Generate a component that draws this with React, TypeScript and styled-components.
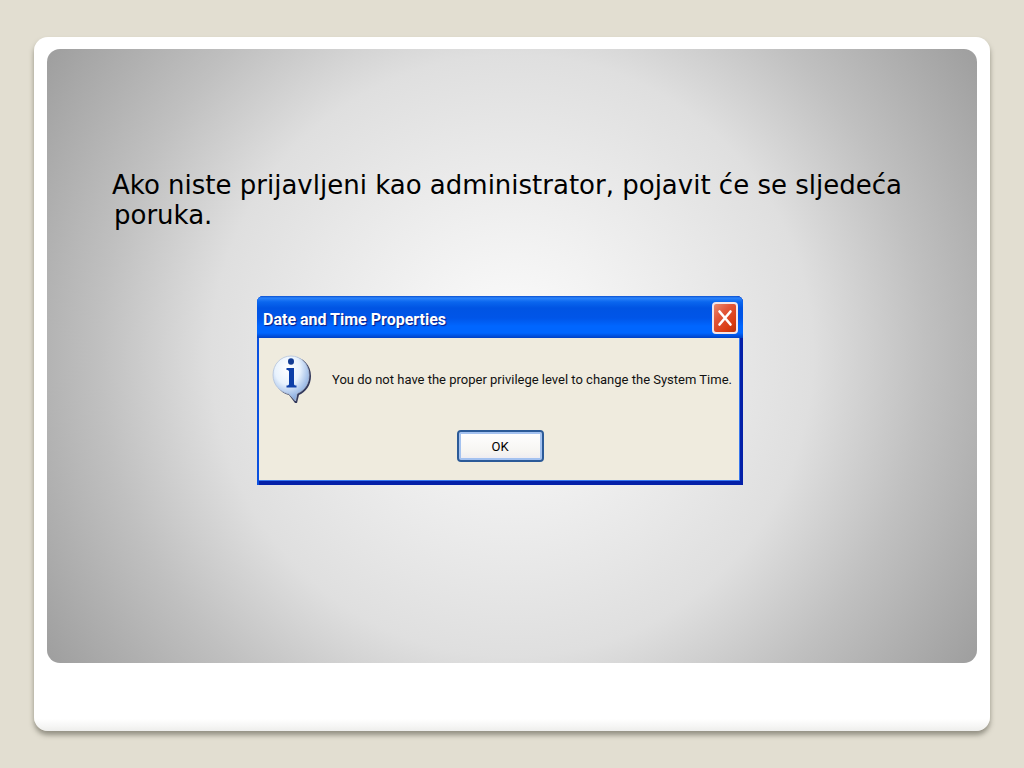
import React from "react";
import styled, { createGlobalStyle } from "styled-components";

const GlobalStyle = createGlobalStyle`
  *, *::before, *::after { box-sizing: border-box; }
  body { margin: 0; background: #e2ded1; }
`;

const Slide = styled.main`
  display: flex;
  min-height: 100vh;
  padding: 37px 34px;
`;

const Frame = styled.div`
  display: flex;
  flex: 1;
  padding: 12px 13px 68px;
  border-radius: 14px;
  background: linear-gradient(to top, #eeeeec 0, #f6f6f5 5px, #fff 12px);
  box-shadow: 0 4px 5px rgba(70, 68, 55, 0.5);
`;

const Panel = styled.section`
  display: flex;
  flex: 1;
  flex-direction: column;
  padding: 121px 65px 40px;
  border-radius: 13px;
  background: radial-gradient(circle farthest-corner at 50% 50%, #fdfdfd 0%, #e8e8e8 38%, #dfdfdf 54%, #c0c0c0 74%, #b0b0b0 86%, #9e9e9e 100%);
`;

const Message = styled.p`
  margin: 0;
  padding-left: 2px;
  color: #000;
  font: 26px/30px "DejaVu Sans", sans-serif;
  text-indent: -2px;
`;

const Dialog = styled.div`
  display: flex;
  flex-direction: column;
  align-self: center;
  width: 100%;
  max-width: 486px;
  margin: 66px 24px 0 0;
  border-radius: 6px 6px 0 0;
  background: #0831d9;
  box-shadow: inset 2px 0 #0a50e0, inset -3px 0 #0420a8, inset 0 -4px #0420a8;
  font-family: Roboto, sans-serif;
`;

const TitleBar = styled.header`
  display: flex;
  align-items: center;
  justify-content: space-between;
  height: 42px;
  padding: 2px 5px 0 6px;
  border-radius: 6px 6px 0 0;
  background: linear-gradient(#0a50d0 0, #2b83fa 2px, #0a66ee 6px, #0054e3 12px, #0055e8 22px, #0066ff 30px, #0066ff 37px, #0040c4 42px);
`;

const Title = styled.h1`
  margin: 0;
  padding-top: 3px;
  color: #fff;
  font-size: 16px;
  line-height: 24px;
  text-shadow: 1px 1px 1px #0a1883;
`;

const CloseButton = styled.button`
  display: grid;
  place-items: center;
  width: 26px;
  height: 32px;
  padding: 0;
  border: 2px solid #f4e6e8;
  border-radius: 4px;
  background: linear-gradient(135deg, #e98a70 0%, #e2573a 35%, #d93c12 75%, #b8330d 100%);
`;

const Body = styled.div`
  display: flex;
  flex-direction: column;
  height: 143px;
  margin: 0 3px 4px 2px;
  padding: 17px 11px 18px 13px;
  border-right: 1px solid #3a78ee;
  border-bottom: 1px solid #3a78ee;
  background: #efebde;
`;

const Notice = styled.div`
  display: flex;
  gap: 20px;
`;

const NoticeText = styled.p`
  margin: 15px 0 0;
  color: #111;
  font-size: 13px;
  line-height: 20px;
  white-space: nowrap;
`;

const OkButton = styled.button`
  align-self: center;
  width: 87px;
  height: 32px;
  margin-top: auto;
  padding: 2px 0 0;
  border: 2px solid #2b5a98;
  border-radius: 4px;
  background: linear-gradient(#fff, #f6f5f2 70%, #eceaf0);
  box-shadow: inset 0 0 0 2px #a4c2f0;
  color: #000;
  font: 13px/20px Roboto, sans-serif;
`;

const Bubble = styled.svg`
  flex: none;
`;

function InfoIcon() {
  return (
    <Bubble width="40" height="50" viewBox="0 0 40 50" aria-hidden="true">
      <defs>
        <radialGradient id="bubble" cx="0.4" cy="0.28" r="0.7">
          <stop offset="0" stopColor="#ffffff" />
          <stop offset="0.5" stopColor="#e8f2fd" />
          <stop offset="1" stopColor="#86aae0" />
        </radialGradient>
      </defs>
      <path d="M21 2C31 2 39 10 39 21C39 30 34 37 27 40L25 48L23 48L17 40C8 38 3 30 3 21C3 10 11 2 21 2Z" fill="#33395c" />
      <path d="M19 1C29 1 37 9 37 20C37 29 32 36 25 38.500L23.500 46L17 39C8 37 1 30 1 20C1 9 9 1 19 1Z" fill="url(#bubble)" stroke="#b4c3da" strokeWidth="0.8" />
      <ellipse cx="19" cy="6.500" rx="3" ry="3.200" fill="#123c94" />
      <path d="M14.500 13H22V29C22 30 23 30.500 24.500 30.500V32.500H14.500V30.500C16 30.500 17 30 17 29V16.500C17 15.500 16 15 14.500 15Z" fill="#0d3fa8" />
    </Bubble>
  );
}

function CloseIcon() {
  return (
    <svg width="16" height="20" viewBox="0 0 16 20" aria-hidden="true">
      <path d="M2.500 3.500L13.500 16.500M13.500 3.500L2.500 16.500" stroke="#fff" strokeWidth="2.600" strokeLinecap="round" />
    </svg>
  );
}

export default function App() {
  return (
    <>
      <GlobalStyle />
      <Slide>
        <Frame>
          <Panel>
            <Message>Ako niste prijavljeni kao administrator, pojavit će se sljedeća poruka.</Message>
            <Dialog role="dialog" aria-labelledby="dialog-title">
              <TitleBar>
                <Title id="dialog-title">Date and Time Properties</Title>
                <CloseButton type="button" aria-label="Close">
                  <CloseIcon />
                </CloseButton>
              </TitleBar>
              <Body>
                <Notice>
                  <InfoIcon />
                  <NoticeText>You do not have the proper privilege level to change the System Time.</NoticeText>
                </Notice>
                <OkButton type="button">OK</OkButton>
              </Body>
            </Dialog>
          </Panel>
        </Frame>
      </Slide>
    </>
  );
}
